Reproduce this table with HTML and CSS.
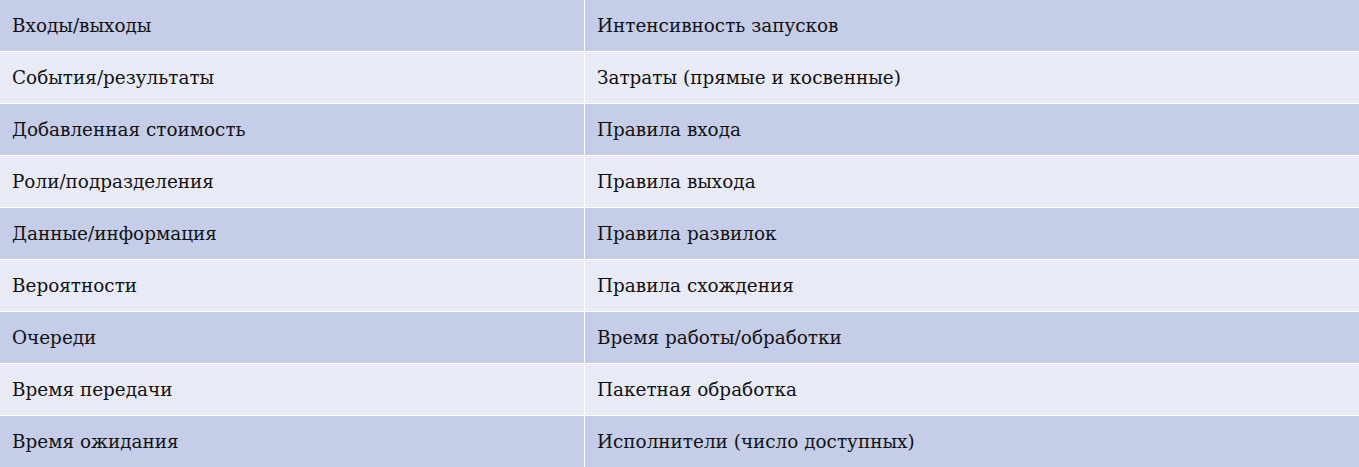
FILE: index.html
```html
<!DOCTYPE html>
<html lang="ru">
<head>
<meta charset="utf-8">
<link rel="stylesheet" href="styles.css">
</head>
<body>
<div class="grid">
  <div class="row dark"><div class="cell c1">Входы/выходы</div><div class="cell c2">Интенсивность запусков</div></div>
  <div class="row light"><div class="cell c1">События/результаты</div><div class="cell c2">Затраты (прямые и косвенные)</div></div>
  <div class="row dark"><div class="cell c1">Добавленная стоимость</div><div class="cell c2">Правила входа</div></div>
  <div class="row light"><div class="cell c1">Роли/подразделения</div><div class="cell c2">Правила выхода</div></div>
  <div class="row dark"><div class="cell c1">Данные/информация</div><div class="cell c2">Правила развилок</div></div>
  <div class="row light"><div class="cell c1">Вероятности</div><div class="cell c2">Правила схождения</div></div>
  <div class="row dark"><div class="cell c1">Очереди</div><div class="cell c2">Время работы/обработки</div></div>
  <div class="row light"><div class="cell c1">Время передачи</div><div class="cell c2">Пакетная обработка</div></div>
  <div class="row dark"><div class="cell c1">Время ожидания</div><div class="cell c2">Исполнители (число доступных)</div></div>
</div>
</body>
</html>
```
FILE: styles.css
```css
html, body {
  margin: 0;
  padding: 0;
  background: #ffffff;
}
.grid {
  width: 1359px;
  display: flex;
  flex-direction: column;
  gap: 1px;
  font-family: "DejaVu Serif", serif;
  font-size: 18.4px;
  color: #111111;
}
.row {
  display: flex;
  gap: 1px;
  height: 51px;
}
.cell {
  display: flex;
  align-items: center;
  padding: 0 12px;
  white-space: nowrap;
}
.c1 { width: 584px; box-sizing: border-box; }
.c2 { flex: 1; }
.dark .cell { background: #c5cde8; }
.light .cell { background: #e8ebf5; }
```
